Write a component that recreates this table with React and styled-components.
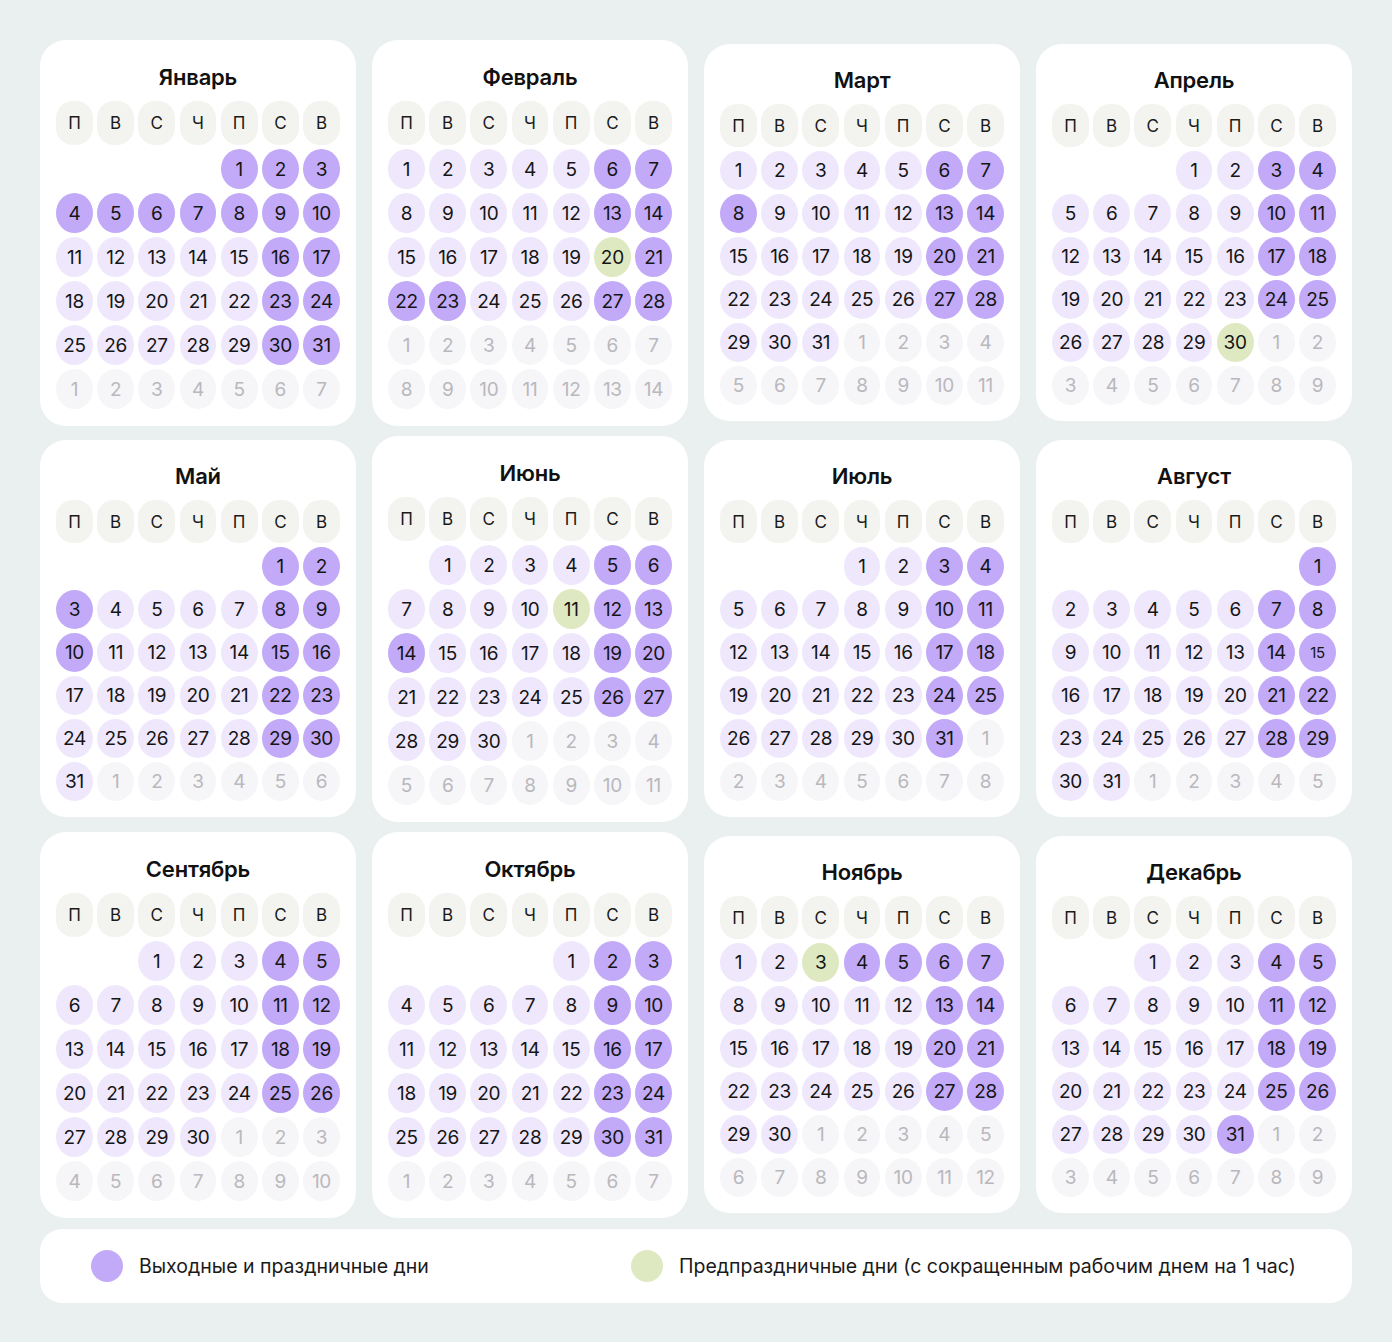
import React from "react";
import styled, { createGlobalStyle, css } from "styled-components";

const Global = createGlobalStyle`
  html, body { margin: 0; padding: 0; background: #e9f0ef; }
  body { font-family: Inter, "Noto Sans", sans-serif; color: #161616; }
`;

const Page = styled.div`
  width: 1392px;
  box-sizing: border-box;
  padding: 40px 40px 40px 40px;
  background: #e9f0ef;
`;

const Grid = styled.div`
  display: grid;
  grid-template-columns: repeat(4, 316px);
  column-gap: 16px;
  row-gap: 10px;
  align-items: start;
`;

const Card = styled.section`
  background: #ffffff;
  border-radius: 26px;
  box-sizing: border-box;
  padding: ${(p) => (p.$compact ? "22px 16px 16px" : "23px 16px 17px")};
  margin-top: ${(p) => (p.$compact ? "4px" : "0")};
  display: flex;
  flex-direction: column;
  gap: 10px;
`;

const Title = styled.h2`
  margin: 0;
  text-align: center;
  font-family: Inter, "Noto Sans", sans-serif;
  font-size: 22px;
  line-height: 28px;
  font-weight: 600;
  color: #111;
  letter-spacing: -0.2px;
`;

const Days = styled.div`
  display: grid;
  grid-template-columns: repeat(7, 1fr);
  column-gap: 4.2px;
  row-gap: 4px;
`;

const WeekDay = styled.div`
  height: ${(p) => (p.$compact ? "43px" : "44px")};
  border-radius: 17px;
  background: #f3f4ef;
  display: flex;
  align-items: center;
  justify-content: center;
  font-size: 17px;
  color: #1a1a1a;
`;

const Day = styled.div`
  height: ${(p) => (p.$compact ? "39px" : "40px")};
  border-radius: 50%;
  display: flex;
  align-items: center;
  justify-content: center;
  font-size: ${(p) => (p.$small ? "15px" : "19px")};
  color: #151515;
  letter-spacing: -0.3px;
  ${(p) =>
    p.$kind === "work" &&
    css`
      background: #efe8fd;
    `}
  ${(p) =>
    p.$kind === "off" &&
    css`
      background: #c2aaf8;
    `}
  ${(p) =>
    p.$kind === "pre" &&
    css`
      background: #dfe9c1;
    `}
  ${(p) =>
    p.$kind === "out" &&
    css`
      background: #f6f5f8;
      color: #b9b8bd;
    `}
  ${(p) =>
    p.$kind === "empty" &&
    css`
      background: transparent;
    `}
`;

const Legend = styled.div`
  margin-top: 11px;
  height: 74px;
  background: #fff;
  border-radius: 22px;
  display: flex;
  align-items: center;
  padding: 0 0 0 51px;
  box-sizing: border-box;
`;

const LegendItem = styled.div`
  display: flex;
  align-items: center;
  gap: 16px;
  width: ${(p) => p.$w || "auto"};
  font-size: 19.5px;
  color: #1a1a1a;
`;

const Dot = styled.span`
  width: 32px;
  height: 32px;
  border-radius: 50%;
  background: ${(p) => p.$color};
  flex: none;
`;

const WEEK = ["П", "В", "С", "Ч", "П", "С", "В"];

const MONTHS = [
  { name: "Январь", offset: 4, days: 31, off: [1,2,3,4,5,6,7,8,9,10,16,17,23,24,30,31], pre: [] },
  { name: "Февраль", offset: 0, days: 28, off: [6,7,13,14,21,22,23,27,28], pre: [20] },
  { name: "Март", offset: 0, days: 31, off: [6,7,8,13,14,20,21,27,28], pre: [], compact: true },
  { name: "Апрель", offset: 3, days: 30, off: [3,4,10,11,17,18,24,25], pre: [30], compact: true },
  { name: "Май", offset: 5, days: 31, off: [1,2,3,8,9,10,15,16,22,23,29,30], pre: [], compact: true },
  { name: "Июнь", offset: 1, days: 30, off: [5,6,12,13,14,19,20,26,27], pre: [11] },
  { name: "Июль", offset: 3, days: 31, off: [3,4,10,11,17,18,24,25,31], pre: [], compact: true },
  { name: "Август", offset: 6, days: 31, off: [1,7,8,14,15,21,22,28,29], pre: [], compact: true, small: [15] },
  { name: "Сентябрь", offset: 2, days: 30, off: [4,5,11,12,18,19,25,26], pre: [] },
  { name: "Октябрь", offset: 4, days: 31, off: [2,3,9,10,16,17,23,24,30,31], pre: [] },
  { name: "Ноябрь", offset: 0, days: 30, off: [4,5,6,7,13,14,20,21,27,28], pre: [3], compact: true },
  { name: "Декабрь", offset: 2, days: 31, off: [4,5,11,12,18,19,25,26,31], pre: [], compact: true },
];

function buildCells(m) {
  const cells = [];
  for (let i = 0; i < m.offset; i++) cells.push({ kind: "empty", label: "" });
  for (let d = 1; d <= m.days; d++) {
    let kind = "work";
    if (m.off.includes(d)) kind = "off";
    if (m.pre.includes(d)) kind = "pre";
    cells.push({ kind, label: d, small: (m.small || []).includes(d) });
  }
  let n = 1;
  while (cells.length < 42) cells.push({ kind: "out", label: n++ });
  return cells;
}

function Month({ m }) {
  const cells = buildCells(m);
  return (
    <Card $compact={m.compact}>
      <Title>{m.name}</Title>
      <Days>
        {WEEK.map((w, i) => (
          <WeekDay key={"w" + i} $compact={m.compact}>{w}</WeekDay>
        ))}
        {cells.map((c, i) => (
          <Day key={i} $kind={c.kind} $compact={m.compact} $small={c.small}>
            {c.label}
          </Day>
        ))}
      </Days>
    </Card>
  );
}

export default function App() {
  return (
    <>
      <Global />
      <Page>
        <Grid>
          {MONTHS.map((m) => (
            <Month key={m.name} m={m} />
          ))}
        </Grid>
        <Legend>
          <LegendItem $w="540px">
            <Dot $color="#c2aaf8" />
            Выходные и праздничные дни
          </LegendItem>
          <LegendItem>
            <Dot $color="#dfe9c1" />
            Предпраздничные дни (с сокращенным рабочим днем на 1 час)
          </LegendItem>
        </Legend>
      </Page>
    </>
  );
}
